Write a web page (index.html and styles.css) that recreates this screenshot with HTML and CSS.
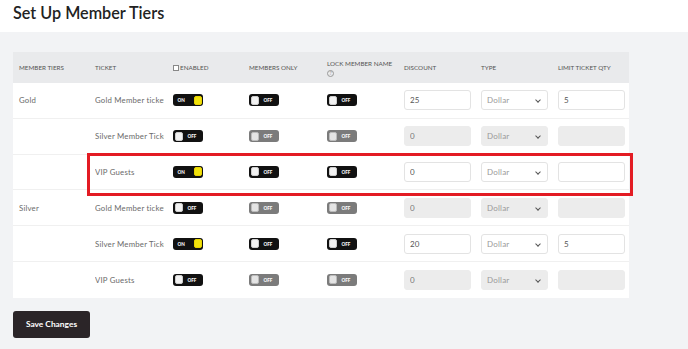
FILE: index.html
```html
<!DOCTYPE html>
<html lang="en">
<head>
    <meta charset="UTF-8">
    <meta name="viewport" content="width=device-width, initial-scale=1.0">
    <title>Set Up Member Tiers</title>
    <link rel="stylesheet" href="styles.css">
</head>
<body>

    <!-- Page Title -->
    <header class="page-head">
        <h1>Set Up Member Tiers</h1>
    </header>

    <main class="content">
        <div class="tiers-panel">

            <!-- Table Header -->
            <div class="tier-row head">
                <div>Member Tiers</div>
                <div>Ticket</div>
                <div class="check-head"><span class="check-box"></span>Enabled</div>
                <div>Members Only</div>
                <div class="lock-head">
                    <span>Lock Member Name</span>
                    <span class="help">?</span>
                </div>
                <div>Discount</div>
                <div>Type</div>
                <div>Limit Ticket Qty</div>
            </div>

            <!-- Gold -->
            <div class="tier-row">
                <div class="tier-name">Gold</div>
                <div class="ticket-name">Gold Member ticket</div>
                <div><span class="toggle on"><span class="label">ON</span><span class="knob"></span></span></div>
                <div><span class="toggle"><span class="knob"></span><span class="label">OFF</span></span></div>
                <div><span class="toggle"><span class="knob"></span><span class="label">OFF</span></span></div>
                <div><input class="field" type="text" value="25"></div>
                <div><div class="select">Dollar</div></div>
                <div><input class="field" type="text" value="5"></div>
            </div>

            <div class="tier-row">
                <div class="tier-name"></div>
                <div class="ticket-name">Silver Member Ticket</div>
                <div><span class="toggle"><span class="knob"></span><span class="label">OFF</span></span></div>
                <div><span class="toggle disabled"><span class="knob"></span><span class="label">OFF</span></span></div>
                <div><span class="toggle disabled"><span class="knob"></span><span class="label">OFF</span></span></div>
                <div><input class="field" type="text" value="0" disabled></div>
                <div><div class="select disabled">Dollar</div></div>
                <div><input class="field" type="text" value="" disabled></div>
            </div>

            <div class="tier-row">
                <div class="tier-name"></div>
                <div class="ticket-name">VIP Guests</div>
                <div><span class="toggle on"><span class="label">ON</span><span class="knob"></span></span></div>
                <div><span class="toggle"><span class="knob"></span><span class="label">OFF</span></span></div>
                <div><span class="toggle"><span class="knob"></span><span class="label">OFF</span></span></div>
                <div><input class="field" type="text" value="0"></div>
                <div><div class="select">Dollar</div></div>
                <div><input class="field" type="text" value=""></div>
            </div>

            <!-- Silver -->
            <div class="tier-row">
                <div class="tier-name">Silver</div>
                <div class="ticket-name">Gold Member ticket</div>
                <div><span class="toggle"><span class="knob"></span><span class="label">OFF</span></span></div>
                <div><span class="toggle disabled"><span class="knob"></span><span class="label">OFF</span></span></div>
                <div><span class="toggle disabled"><span class="knob"></span><span class="label">OFF</span></span></div>
                <div><input class="field" type="text" value="0" disabled></div>
                <div><div class="select disabled">Dollar</div></div>
                <div><input class="field" type="text" value="" disabled></div>
            </div>

            <div class="tier-row">
                <div class="tier-name"></div>
                <div class="ticket-name">Silver Member Ticket</div>
                <div><span class="toggle on"><span class="label">ON</span><span class="knob"></span></span></div>
                <div><span class="toggle"><span class="knob"></span><span class="label">OFF</span></span></div>
                <div><span class="toggle"><span class="knob"></span><span class="label">OFF</span></span></div>
                <div><input class="field" type="text" value="20"></div>
                <div><div class="select">Dollar</div></div>
                <div><input class="field" type="text" value="5"></div>
            </div>

            <div class="tier-row last">
                <div class="tier-name"></div>
                <div class="ticket-name">VIP Guests</div>
                <div><span class="toggle"><span class="knob"></span><span class="label">OFF</span></span></div>
                <div><span class="toggle disabled"><span class="knob"></span><span class="label">OFF</span></span></div>
                <div><span class="toggle disabled"><span class="knob"></span><span class="label">OFF</span></span></div>
                <div><input class="field" type="text" value="0" disabled></div>
                <div><div class="select disabled">Dollar</div></div>
                <div><input class="field" type="text" value="" disabled></div>
            </div>

            <!-- Annotation box -->
            <div class="highlight"></div>
        </div>

        <button class="save-btn">Save Changes</button>
    </main>

</body>
</html>
```

FILE: styles.css
```css
/* Reset */
* {
    margin: 0;
    padding: 0;
    box-sizing: border-box;
}

body {
    font-family: Lato, 'Open Sans', sans-serif;
    background: #f2f3f5;
    color: #555;
    min-height: 100vh;
}

/* Title band */
.page-head {
    background: #fff;
    height: 32px;
    padding: 3px 13px 0;
}

.page-head h1 {
    font-size: 16.2px;
    font-weight: 600;
    color: #222;
    line-height: 20px;
}

.content {
    padding: 20px 13px 0;
}

/* Panel */
.tiers-panel {
    position: relative;
    width: 616px;
    background: #fff;
}

.tier-row {
    display: grid;
    grid-template-columns: 76px 78px 76px 78px 77px 77px 77px 67px;
    padding: 0 4px 0 6px;
    height: 35.8px;
    align-items: center;
    font-size: 7.8px;
    letter-spacing: 0.2px;
    color: #6a6a6a;
    border-bottom: 1px solid #f0f0f0;
}

.tier-row.last {
    border-bottom: none;
}

.tier-row.head {
    height: 31px;
    background: #e9eaec;
    font-size: 6.3px;
    letter-spacing: 0;
    text-transform: uppercase;
    color: #555;
    border-bottom: none;
}

.check-head {
    display: flex;
    align-items: center;
}

.check-box {
    width: 6px;
    height: 6px;
    border: 1px solid #888;
    background: #fff;
    margin-right: 1px;
}

.lock-head {
    display: flex;
    flex-direction: column;
    align-items: flex-start;
    gap: 3px;
    padding-top: 1px;
}

.help {
    width: 7px;
    height: 7px;
    border: 1px solid #999;
    border-radius: 50%;
    font-size: 5px;
    line-height: 5px;
    text-align: center;
    color: #999;
}

.ticket-name {
    width: 69px;
    white-space: nowrap;
    overflow: hidden;
}

/* Toggles */
.toggle {
    display: flex;
    align-items: center;
    justify-content: space-between;
    width: 30px;
    height: 12px;
    padding: 0 1.5px;
    border-radius: 3px;
    background: #111;
}

.toggle .label {
    font-size: 4.6px;
    font-weight: 900;
    color: #fff;
    padding: 0 3px;
    flex: 1;
    text-align: center;
    letter-spacing: 0;
}

.toggle .knob {
    width: 8px;
    height: 9px;
    border-radius: 2px;
    background: #f2f2f2;
    border: 1px solid #ccc;
}

.toggle.on .label {
    text-align: left;
}

.toggle.on .knob {
    background: #f1e20c;
    border-color: #e7d300;
}

.toggle.disabled {
    background: #7b7b7b;
}

.toggle.disabled .knob {
    background: #e4e4e4;
    border-color: #bbb;
}

/* Inputs */
.field,
.select {
    width: 67px;
    height: 20px;
    border: 1px solid #e3e3e3;
    border-radius: 3px;
    background: #fff;
    font-family: inherit;
    font-size: 8px;
    color: #555;
    padding: 0 5px;
    outline: none;
}

.field:disabled {
    background: #ececec;
    border-color: #ececec;
    color: #777;
}

.select {
    display: flex;
    align-items: center;
    position: relative;
    color: #999;
}

.select::after {
    content: "";
    position: absolute;
    right: 7px;
    top: 7px;
    width: 3px;
    height: 3px;
    border-right: 1.2px solid #555;
    border-bottom: 1.2px solid #555;
    transform: rotate(45deg);
}

.select.disabled {
    background: #ececec;
    border-color: #ececec;
}

/* Red annotation */
.highlight {
    position: absolute;
    left: 74px;
    top: 101px;
    width: 546px;
    height: 43px;
    border: 3px solid #e31b23;
}

/* Save Button */
.save-btn {
    margin-top: 13px;
    width: 77px;
    height: 27px;
    border: none;
    border-radius: 3px;
    background: #2b2528;
    color: #fff;
    font-family: inherit;
    font-size: 8.4px;
    font-weight: 700;
}
```
